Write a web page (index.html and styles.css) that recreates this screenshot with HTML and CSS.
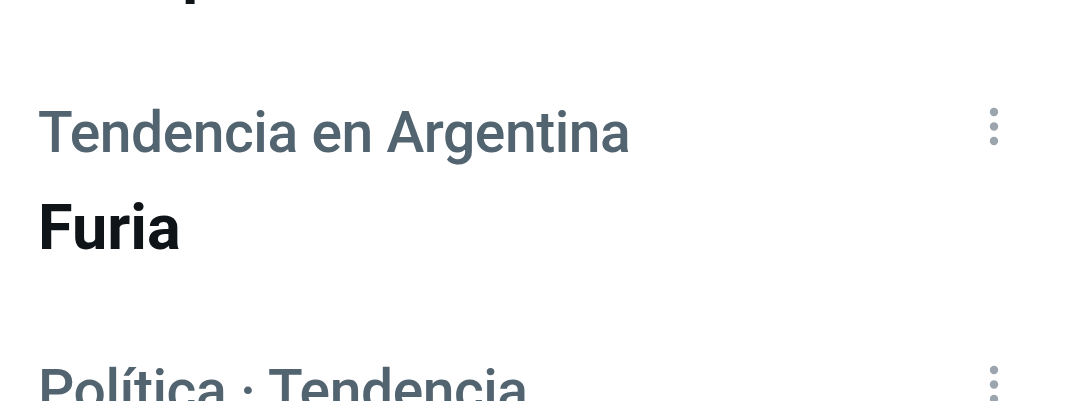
FILE: index.html
```html
<!DOCTYPE html>
<html lang="es">
<head>
    <meta charset="UTF-8">
    <meta name="viewport" content="width=device-width, initial-scale=1.0">
    <title>Tendencias</title>
    <link rel="stylesheet" href="styles.css">
</head>
<body>
    <div class="trends">
        <div class="trend">
            <div class="trend-text">
                <div class="trend-meta">Tendencia en Argentina</div>
                <div class="trend-title">Tiempo</div>
            </div>
            <button class="more" aria-label="Más opciones">
                <svg viewBox="0 0 16 45" width="16" height="45"><circle cx="8" cy="8" r="4.2"/><circle cx="8" cy="22.5" r="4.2"/><circle cx="8" cy="37" r="4.2"/></svg>
            </button>
        </div>
        <div class="trend">
            <div class="trend-text">
                <div class="trend-meta">Tendencia en Argentina</div>
                <div class="trend-title">Furia</div>
            </div>
            <button class="more" aria-label="Más opciones">
                <svg viewBox="0 0 16 45" width="16" height="45"><circle cx="8" cy="8" r="4.2"/><circle cx="8" cy="22.5" r="4.2"/><circle cx="8" cy="37" r="4.2"/></svg>
            </button>
        </div>
        <div class="trend">
            <div class="trend-text">
                <div class="trend-meta">Política · Tendencia</div>
                <div class="trend-title">Milei</div>
            </div>
            <button class="more" aria-label="Más opciones">
                <svg viewBox="0 0 16 45" width="16" height="45"><circle cx="8" cy="8" r="4.2"/><circle cx="8" cy="22.5" r="4.2"/><circle cx="8" cy="37" r="4.2"/></svg>
            </button>
        </div>
    </div>
</body>
</html>
```

FILE: styles.css
```css
body {
    margin: 0;
    padding: 0;
    background: #ffffff;
    font-family: Roboto, "Noto Sans", sans-serif;
    overflow: hidden;
}

.trends {
    margin-top: -205px;
}

.trend {
    display: flex;
    justify-content: space-between;
    align-items: flex-start;
    padding: 44px 78px 43px 38px;
}

.trend-meta {
    font-size: 57px;
    line-height: 72px;
    font-weight: 500;
    letter-spacing: -0.45px;
    color: #536471;
}

.trend-title {
    margin-top: 19px;
    font-size: 63px;
    line-height: 80px;
    font-weight: 700;
    color: #0f1419;
}

.more {
    margin-top: 7px;
    padding: 0;
    border: none;
    background: none;
}

.more svg {
    display: block;
    fill: #9ca5ae;
}
```
